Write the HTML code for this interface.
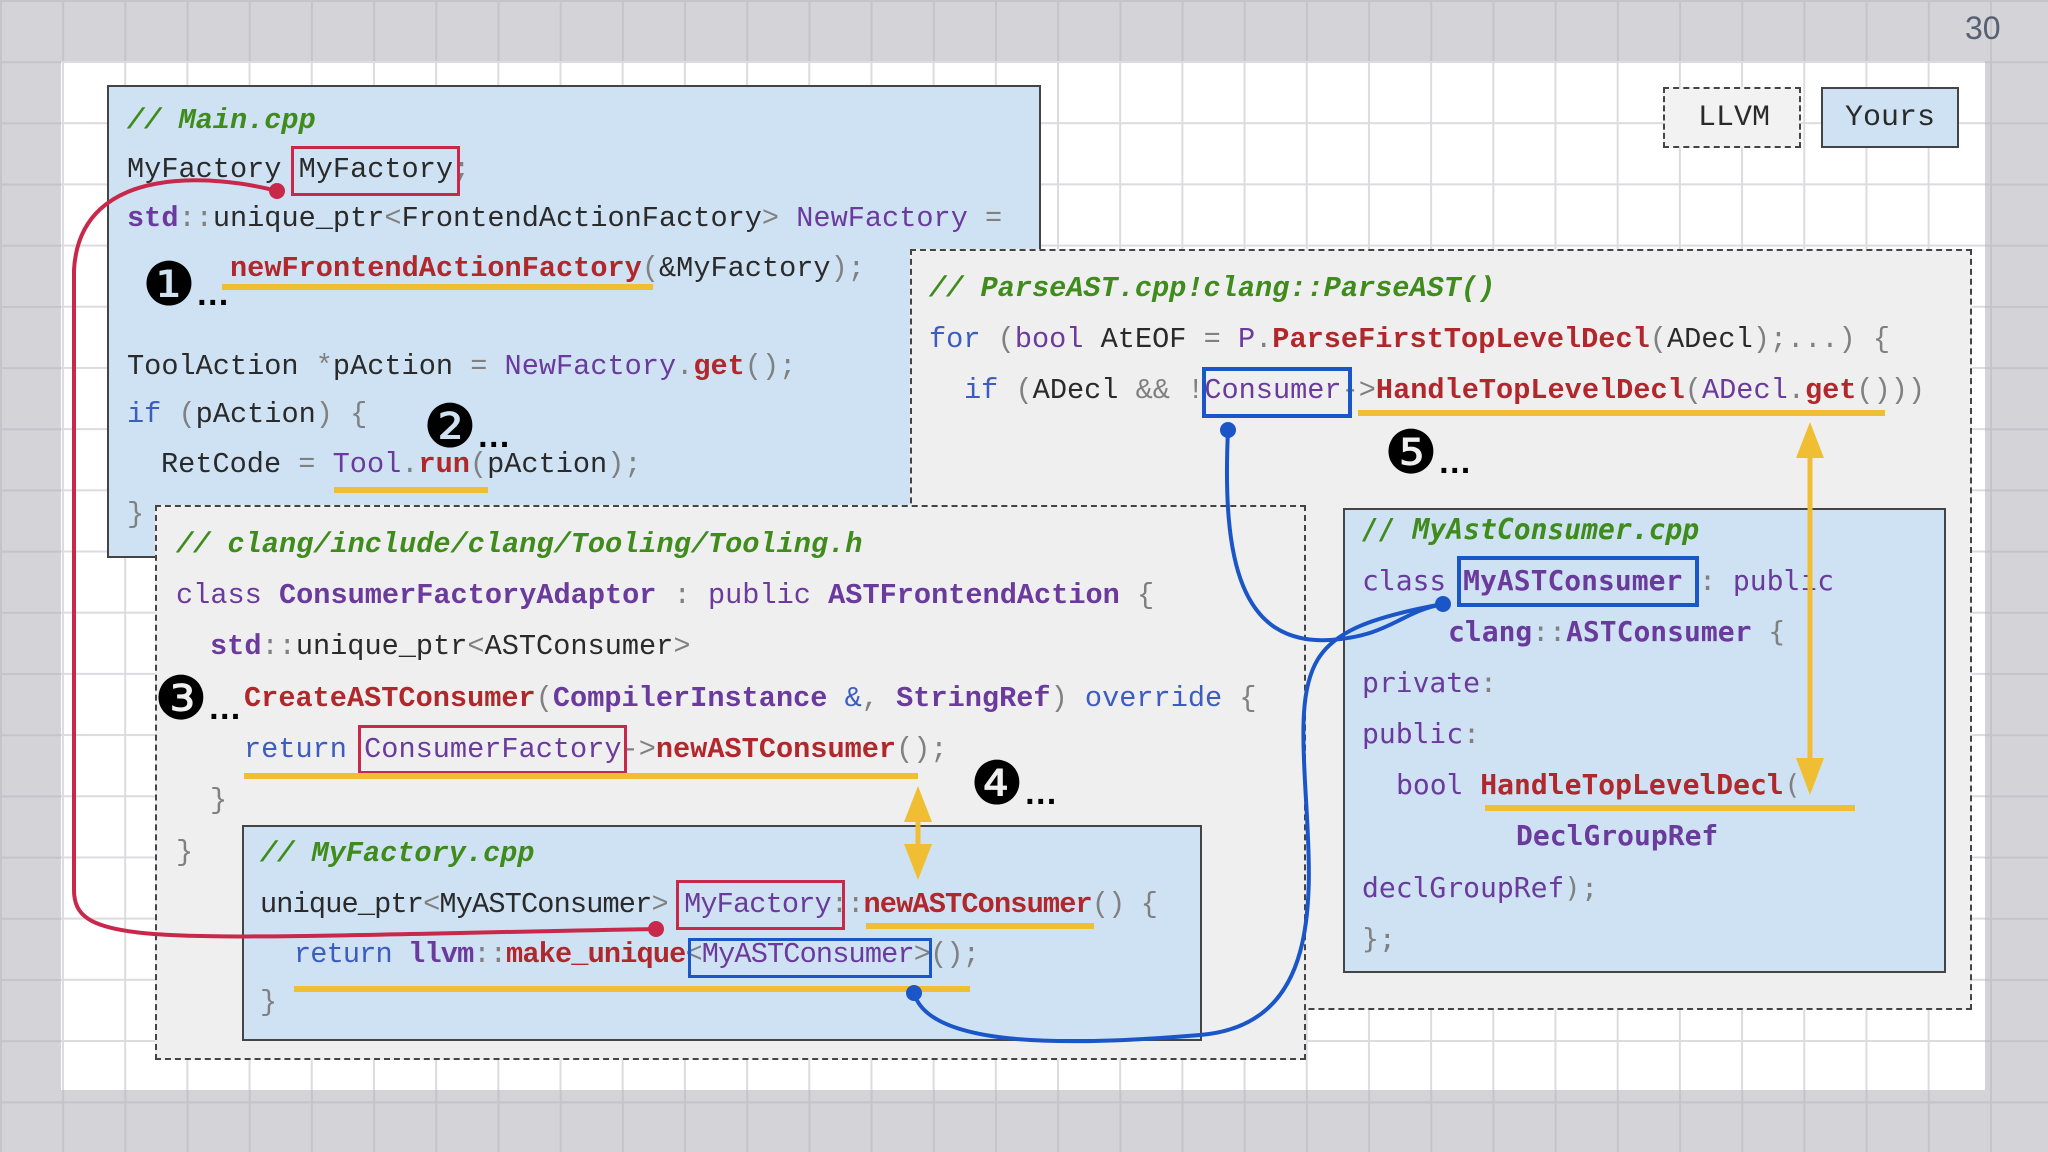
<!DOCTYPE html>
<html><head><meta charset="utf-8"><style>
html,body{margin:0;padding:0}
body{width:2048px;height:1152px;position:relative;overflow:hidden;background-color:#d3d3d8;
background-image:linear-gradient(#c4c4c9 2px,transparent 2px),linear-gradient(90deg,#c4c4c9 2px,transparent 2px);background-size:62.2px 61.2px,62.2px 61.2px}
.white{position:absolute;left:61px;top:61px;width:1924px;height:1029px;background-color:#fff;
background-image:linear-gradient(#dcdce0 2px,transparent 2px),linear-gradient(90deg,#dcdce0 2px,transparent 2px);background-size:62.2px 61.2px;background-position:1px 0px}
.box{position:absolute;box-sizing:border-box}
.blue{background:#cfe2f3;border:2px solid #444}
.dash{background:#efeff0;border:2px dashed #444}
.l{position:absolute;white-space:pre;font-family:"Liberation Mono",monospace;font-size:28.6px;line-height:50px;height:50px;color:#2a2a2a}
.d{font-family:"DejaVu Sans Mono",monospace;font-size:28px}
.c{color:#3f8c1c;font-style:italic;font-weight:bold}
.k{color:#3c5cc0}
.t{color:#6a3a9c;font-weight:bold}
.p{color:#6a3a9c}
.f{color:#b0282c;font-weight:bold}
.g{color:#808080}
.rb{position:absolute;border:3px solid #c8284a;box-sizing:border-box}
.bb{position:absolute;border:4px solid #1a56c8;box-sizing:border-box}
.yu{position:absolute;height:6px;background:#f0be32}
.num{position:absolute;font-family:"DejaVu Sans",sans-serif;font-size:60px;line-height:60px;color:#000;white-space:pre}
.num b{font-size:34px;font-family:"Liberation Sans",sans-serif}
</style></head><body>
<div class="white"></div>
<div style="position:absolute;left:1965px;top:10px;font-family:'Liberation Sans',sans-serif;font-size:32px;color:#556070">30</div>

<div class="box dash" style="left:1663px;top:87px;width:138px;height:61px;background:#f2f2f2"></div>
<div class="l" style="left:1698px;top:93px;font-size:30px">LLVM</div>
<div class="box blue" style="left:1821px;top:87px;width:138px;height:61px"></div>
<div class="l" style="left:1845px;top:93px;font-size:30px">Yours</div>

<!-- Main.cpp -->
<div class="box blue" style="left:107px;top:85px;width:934px;height:473px"></div>
<div class="l" style="left:127px;top:96px"><span class="c">// Main.cpp</span></div>
<div class="l" style="left:127px;top:145px">MyFactory MyFactory<span class="g">;</span></div>
<div class="l" style="left:127px;top:194px"><span class="t">std</span><span class="g">::</span>unique_ptr<span class="g">&lt;</span>FrontendActionFactory<span class="g">&gt;</span> <span class="p">NewFactory</span> <span class="g">=</span></div>
<div class="l" style="left:230px;top:244px"><span class="f">newFrontendActionFactory</span><span class="g">(</span>&amp;MyFactory<span class="g">);</span></div>
<div class="l" style="left:127px;top:342px">ToolAction <span class="g">*</span>pAction <span class="g">=</span> <span class="p">NewFactory</span><span class="g">.</span><span class="f">get</span><span class="g">();</span></div>
<div class="l" style="left:127px;top:390px"><span class="k">if</span> <span class="g">(</span>pAction<span class="g">)</span> <span class="g">{</span></div>
<div class="l" style="left:161px;top:440px">RetCode <span class="g">=</span> <span class="p">Tool</span><span class="g">.</span><span class="f">run</span><span class="g">(</span>pAction<span class="g">);</span></div>
<div class="l" style="left:127px;top:490px"><span class="g">}</span></div>
<div class="rb" style="left:291px;top:146px;width:169px;height:50px"></div>
<div class="yu" style="left:222px;top:284px;width:431px"></div>
<div class="yu" style="left:334px;top:487px;width:154px"></div>
<div class="num" style="left:142px;top:255px">❶<b>…</b></div>
<div class="num" style="left:423px;top:397px">❷<b>…</b></div>

<!-- ParseAST -->
<div class="box dash" style="left:910px;top:249px;width:1062px;height:761px"></div>
<div class="l" style="left:929px;top:264px"><span class="c">// ParseAST.cpp!clang::ParseAST()</span></div>
<div class="l" style="left:929px;top:315px"><span class="k">for</span> <span class="g">(</span><span class="p">bool</span> AtEOF <span class="g">=</span> <span class="p">P</span><span class="g">.</span><span class="f">ParseFirstTopLevelDecl</span><span class="g">(</span>ADecl<span class="g">);...)</span> <span class="g">{</span></div>
<div class="l" style="left:964px;top:366px"><span class="k">if</span> <span class="g">(</span>ADecl <span class="g">&amp;&amp;</span> <span class="g">!</span><span class="p">Consumer</span><span class="g">-&gt;</span><span class="f">HandleTopLevelDecl</span><span class="g">(</span><span class="p">ADecl</span><span class="g">.</span><span class="f">get</span><span class="g">()))</span></div>
<div class="bb" style="left:1202px;top:367px;width:150px;height:51px"></div>
<div class="yu" style="left:1358px;top:410px;width:527px"></div>
<div class="num" style="left:1384px;top:423px">❺<b>…</b></div>

<!-- MyAstConsumer -->
<div class="box blue" style="left:1343px;top:508px;width:603px;height:465px"></div>
<div class="l d" style="left:1362px;top:505px"><span class="c">// MyAstConsumer.cpp</span></div>
<div class="l d" style="left:1362px;top:556px"><span class="p">class</span> <span class="t">MyASTConsumer</span> <span class="g">:</span> <span class="p">public</span></div>
<div class="l d" style="left:1448px;top:607px"><span class="t">clang</span><span class="g">::</span><span class="t">ASTConsumer</span> <span class="g">{</span></div>
<div class="l d" style="left:1362px;top:658px"><span class="p">private</span><span class="g">:</span></div>
<div class="l d" style="left:1362px;top:709px"><span class="p">public</span><span class="g">:</span></div>
<div class="l d" style="left:1396px;top:760px"><span class="p">bool</span> <span class="f">HandleTopLevelDecl</span><span class="g">(</span></div>
<div class="l d" style="left:1516px;top:811px"><span class="t">DeclGroupRef</span></div>
<div class="l d" style="left:1362px;top:863px"><span class="p">declGroupRef</span><span class="g">);</span></div>
<div class="l d" style="left:1362px;top:914px"><span class="g">};</span></div>
<div class="bb" style="left:1457px;top:556px;width:242px;height:51px"></div>
<div class="yu" style="left:1485px;top:805px;width:370px"></div>

<!-- Tooling.h -->
<div class="box dash" style="left:155px;top:505px;width:1151px;height:555px"></div>
<div class="l" style="left:176px;top:520px"><span class="c">// clang/include/clang/Tooling/Tooling.h</span></div>
<div class="l" style="left:176px;top:571px"><span class="p">class</span> <span class="t">ConsumerFactoryAdaptor</span> <span class="g">:</span> <span class="p">public</span> <span class="t">ASTFrontendAction</span> <span class="g">{</span></div>
<div class="l" style="left:210px;top:622px"><span class="t">std</span><span class="g">::</span>unique_ptr<span class="g">&lt;</span>ASTConsumer<span class="g">&gt;</span></div>
<div class="l" style="left:244px;top:674px"><span class="f">CreateASTConsumer</span><span class="g">(</span><span class="t">CompilerInstance</span> <span class="k">&amp;</span><span class="g">,</span> <span class="t">StringRef</span><span class="g">)</span> <span class="k">override</span> <span class="g">{</span></div>
<div class="l" style="left:244px;top:725px"><span class="k">return</span> <span class="p">ConsumerFactory</span><span class="g">-&gt;</span><span class="f">newASTConsumer</span><span class="g">();</span></div>
<div class="l" style="left:210px;top:776px"><span class="g">}</span></div>
<div class="l" style="left:176px;top:828px"><span class="g">}</span></div>
<div class="rb" style="left:358px;top:725px;width:269px;height:49px"></div>
<div class="yu" style="left:244px;top:773px;width:674px"></div>
<div class="num" style="left:154px;top:669px">❸<b>…</b></div>
<div class="num" style="left:970px;top:754px">❹<b>…</b></div>

<!-- MyFactory.cpp -->
<div class="box blue" style="left:242px;top:825px;width:960px;height:216px"></div>
<div class="l" style="left:260px;top:829px"><span class="c">// MyFactory.cpp</span></div>
<div class="l" style="left:260px;top:880px;letter-spacing:-0.85px">unique_ptr<span class="g">&lt;</span>MyASTConsumer<span class="g">&gt;</span> <span class="p">MyFactory</span><span class="g">::</span><span class="f">newASTConsumer</span><span class="g">()</span> <span class="g">{</span></div>
<div class="l" style="left:294px;top:930px;letter-spacing:-0.85px"><span class="k">return</span> <span class="t">llvm</span><span class="g">::</span><span class="f">make_unique</span><span class="g">&lt;</span><span class="p">MyASTConsumer</span><span class="g">&gt;();</span></div>
<div class="l" style="left:260px;top:978px"><span class="g">}</span></div>
<div class="rb" style="left:676px;top:880px;width:169px;height:50px"></div>
<div class="bb" style="left:688px;top:938px;width:244px;height:40px;border-width:3px"></div>
<div class="yu" style="left:866px;top:923px;width:228px"></div>
<div class="yu" style="left:294px;top:986px;width:676px"></div>

<svg width="2048" height="1152" style="position:absolute;left:0;top:0">
<path d="M277,191 C220,176 80,160 74,270 L74,890 C74,950 160,938 656,929" fill="none" stroke="#c8284a" stroke-width="4"/>
<circle cx="277" cy="191" r="8" fill="#c8284a"/><circle cx="656" cy="929" r="8" fill="#c8284a"/>
<path d="M1228,430 C1222,560 1240,645 1330,640 C1390,636 1400,612 1443,604" fill="none" stroke="#1a56c8" stroke-width="4"/>
<path d="M914,993 C930,1050 1080,1045 1200,1035 C1320,1025 1312,900 1306,800 C1298,660 1300,630 1443,604" fill="none" stroke="#1a56c8" stroke-width="4"/>
<circle cx="1228" cy="430" r="8" fill="#1a56c8"/><circle cx="1443" cy="604" r="8" fill="#1a56c8"/><circle cx="914" cy="993" r="8" fill="#1a56c8"/>
<line x1="1810" y1="445" x2="1810" y2="772" stroke="#f0be32" stroke-width="5"/>
<polygon points="1810,422 1796,458 1824,458" fill="#f0be32"/>
<polygon points="1810,795 1796,758 1824,758" fill="#f0be32"/>
<line x1="918" y1="805" x2="918" y2="865" stroke="#f0be32" stroke-width="5"/>
<polygon points="918,786 904,822 932,822" fill="#f0be32"/>
<polygon points="918,880 904,844 932,844" fill="#f0be32"/>
</svg>
</body></html>
